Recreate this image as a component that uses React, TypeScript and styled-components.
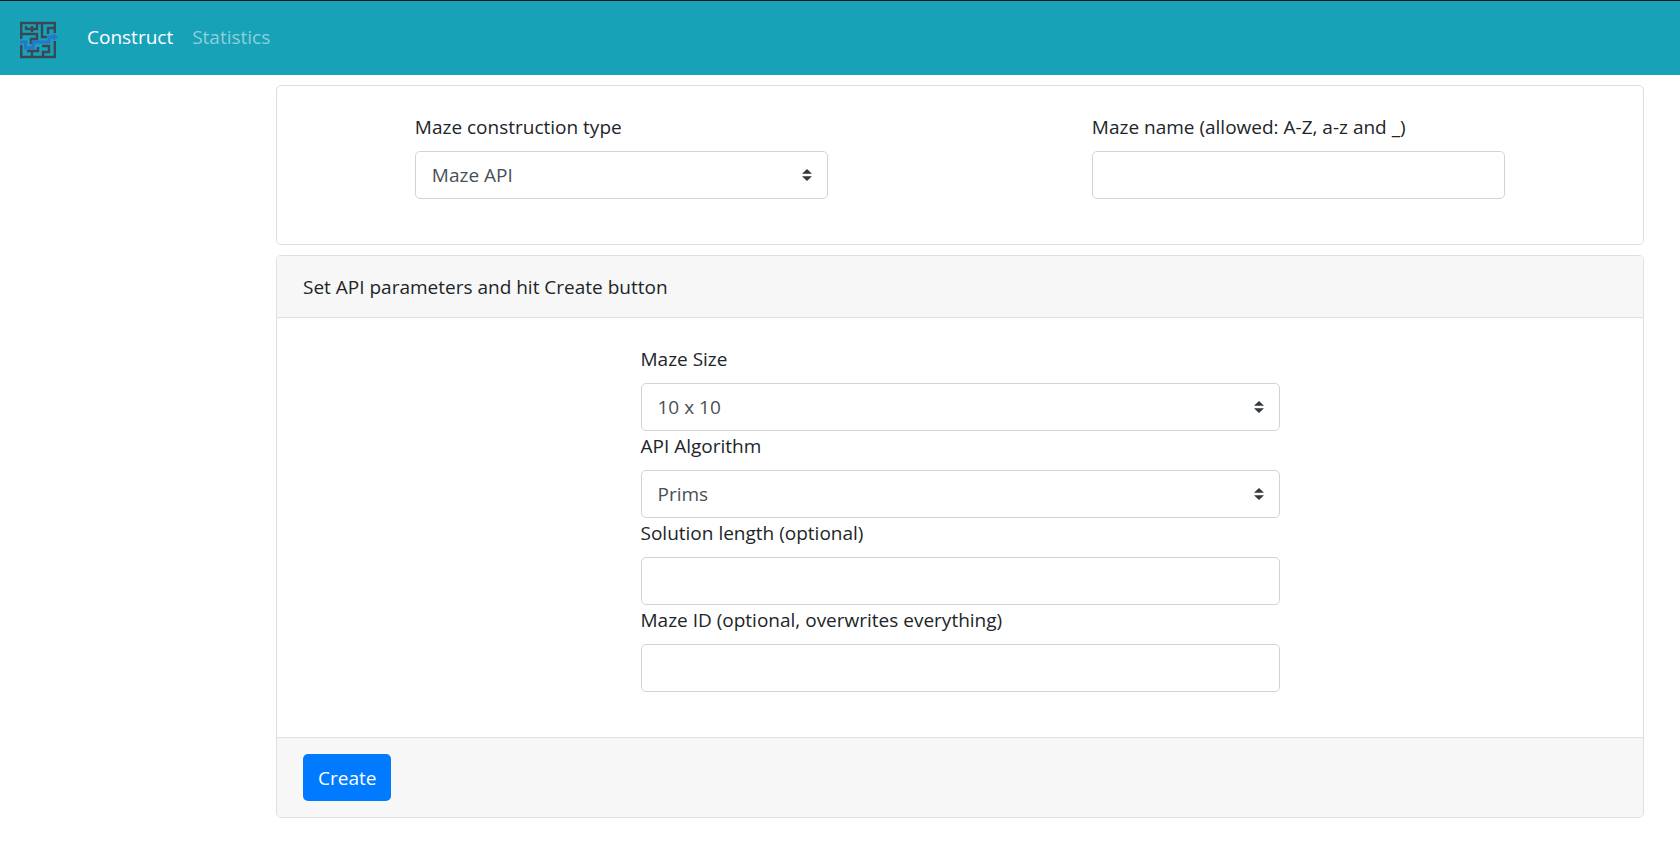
import React from "react";
import styled, { createGlobalStyle } from "styled-components";

const GlobalStyle = createGlobalStyle`
  *, *::before, *::after { box-sizing: border-box; }
  body {
    margin: 0;
    background: #fff;
    color: #212529;
    font-family: "Segoe UI", "Open Sans", "Noto Sans", sans-serif;
    font-size: 19px;
    line-height: 30px;
  }
`;

const Navbar = styled.nav`
  display: flex;
  align-items: center;
  gap: 29px;
  height: 75px;
  padding: 0 20px;
  border-top: 1px solid #10151a;
  background: #17a2b8;
`;

const Brand = styled.a`
  display: flex;
  padding-top: 4px;
`;

const NavLinks = styled.div`
  display: flex;
  gap: 19px;
  padding-bottom: 2px;
`;

const NavLink = styled.a<{ $active?: boolean }>`
  color: ${(p) => (p.$active ? "#fff" : "rgba(255, 255, 255, 0.5)")};
  text-decoration: none;
`;

const Main = styled.main`
  display: flex;
  flex-direction: column;
  gap: 10px;
  margin: 10px 36px 0 276px;
`;

const Card = styled.section`
  border: 1px solid #dfdfdf;
  border-radius: 5px;
  overflow: hidden;
`;

const CardHeader = styled.header`
  padding: 16px 26px 15px;
  border-bottom: 1px solid #dfdfdf;
  background: #f7f7f7;
`;

const CardFooter = styled.footer`
  padding: 16px 26px;
  border-top: 1px solid #dfdfdf;
  background: #f7f7f7;
`;

const CardBody = styled.div`
  display: grid;
  grid-template-columns: repeat(12, 1fr);
  padding: 26px 6px 45px;
`;

const Column = styled.div<{ $start: number; $span: number }>`
  grid-column: ${(p) => p.$start} / span ${(p) => p.$span};
  padding: 0 19px;
`;

const Label = styled.label`
  display: block;
  margin-bottom: 9px;
`;

const Input = styled.input`
  display: block;
  width: 100%;
  height: 48px;
  padding: 0 15px;
  border: 1px solid #ced4da;
  border-radius: 5px;
  background: #fff;
  color: #495057;
  font: inherit;
`;

const SelectWrap = styled.div`
  display: grid;
  align-items: center;

  > * { grid-area: 1 / 1; }
`;

const Select = styled.select`
  width: 100%;
  height: 48px;
  padding: 0 35px 0 16px;
  border: 1px solid #ced4da;
  border-radius: 5px;
  background: #fff;
  color: #495057;
  font: inherit;
  appearance: none;
`;

const Arrows = styled.svg`
  justify-self: end;
  margin-right: 16px;
  pointer-events: none;
`;

const Button = styled.button`
  display: block;
  height: 47px;
  padding: 0 15px;
  border: 0;
  border-radius: 5px;
  background: #007bff;
  color: #fff;
  font: inherit;
`;

function Logo() {
  return (
    <svg width="38" height="38" viewBox="0 0 38 38" fill="none" aria-label="Maze">
      <g stroke="#3b4754" strokeWidth="2.4">
        <path d="M1.2 18V2H34.8V12M34.8 20V36H1.2V24" />
        <path d="M6 5V8H12M12 5V11M12 8H17V2M1 13H17V18H11V23M22 2V16H27M28 13V7H34" />
        <path d="M7 30H18V26M12 30V36M22 25H29V31H23V36" />
      </g>
      <path stroke="#2a74c9" strokeWidth="3" d="M0 21H5.500V27H13V21H29V16H34" />
      <path fill="#2a74c9" d="M33 12L38 16L33 20Z" />
    </svg>
  );
}

function SelectField({ id, label, options }: { id: string; label: string; options: string[] }) {
  return (
    <>
      <Label htmlFor={id}>{label}</Label>
      <SelectWrap>
        <Select id={id}>
          {options.map((o) => (
            <option key={o}>{o}</option>
          ))}
        </Select>
        <Arrows width="10" height="12" viewBox="0 0 4 5" preserveAspectRatio="none" fill="#343a40">
          <path d="M2 0L0 2h4zm0 5L0 3h4z" />
        </Arrows>
      </SelectWrap>
    </>
  );
}

function TextField({ id, label }: { id: string; label: string }) {
  return (
    <>
      <Label htmlFor={id}>{label}</Label>
      <Input id={id} type="text" />
    </>
  );
}

export default function App() {
  return (
    <>
      <GlobalStyle />
      <Navbar>
        <Brand href="#"><Logo /></Brand>
        <NavLinks>
          <NavLink href="#construct" $active>Construct</NavLink>
          <NavLink href="#statistics">Statistics</NavLink>
        </NavLinks>
      </Navbar>
      <Main>
        <Card>
          <CardBody>
            <Column $start={2} $span={4}>
              <SelectField id="type" label="Maze construction type" options={["Maze API"]} />
            </Column>
            <Column $start={8} $span={4}>
              <TextField id="name" label="Maze name (allowed: A-Z, a-z and _)" />
            </Column>
          </CardBody>
        </Card>
        <Card>
          <CardHeader>Set API parameters and hit Create button</CardHeader>
          <CardBody>
            <Column $start={4} $span={6}>
              <SelectField id="size" label="Maze Size" options={["10 x 10"]} />
              <SelectField id="algorithm" label="API Algorithm" options={["Prims"]} />
              <TextField id="length" label="Solution length (optional)" />
              <TextField id="maze-id" label="Maze ID (optional, overwrites everything)" />
            </Column>
          </CardBody>
          <CardFooter>
            <Button type="button">Create</Button>
          </CardFooter>
        </Card>
      </Main>
    </>
  );
}
